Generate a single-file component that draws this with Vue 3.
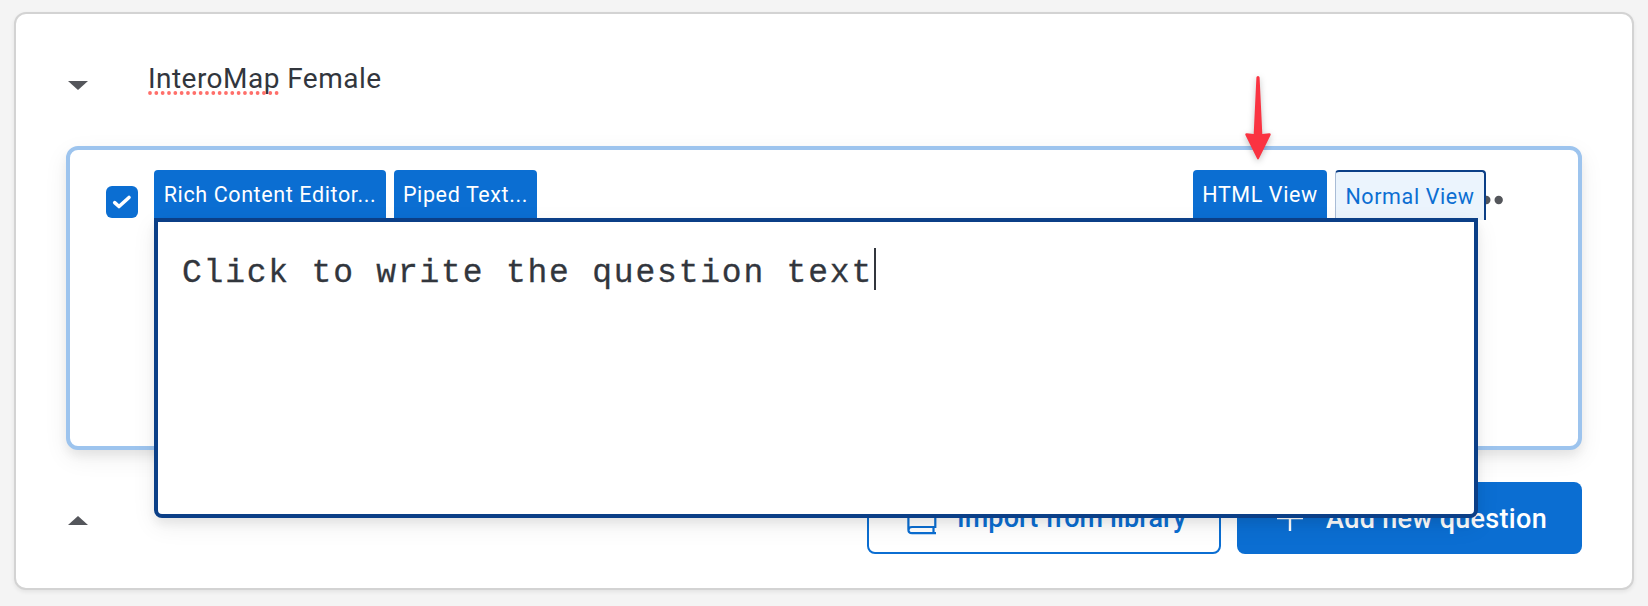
<script setup>
const title = { checked: 'InteroMap', rest: ' Female' }
const questionText = 'Click to write the question text'
</script>

<template>
  <main class="page">
    <section class="block">
      <header class="block-head">
        <svg class="caret" width="20" height="9" viewBox="0 0 20 9"><path d="M0 0H20L10 9Z" fill="#54565b" /></svg>
        <h1 class="title"><span class="misspelt">{{ title.checked }}<svg class="dots" width="132" height="4" viewBox="0 0 132 4"><line x1="2" y1="2" x2="131" y2="2" stroke="#ff6f6a" stroke-width="3.8" stroke-linecap="round" stroke-dasharray="0 6.33" /></svg></span>{{ title.rest }}</h1>
      </header>

      <article class="question">
        <span class="check">
          <svg width="32" height="32" viewBox="0 0 32 32"><path d="M8.7 16.7L13 20.5L23 11.5" fill="none" stroke="#fff" stroke-width="3.6" stroke-linecap="round" stroke-linejoin="round" /></svg>
        </span>
        <svg class="more" width="36" height="10" viewBox="0 0 36 10"><circle cx="5" cy="5" r="4.2" /><circle cx="17.3" cy="5" r="4.2" /><circle cx="29.7" cy="5" r="4.2" /></svg>

        <div class="editor">
          <nav class="tabs">
            <button class="tab rich"><span>Rich Content Editor...</span></button>
            <button class="tab piped"><span>Piped Text...</span></button>
            <button class="tab html"><span>HTML View</span></button>
            <button class="tab normal"><span>Normal View</span></button>
          </nav>
          <div class="field">
            <span class="code">{{ questionText }}</span><i class="cursor"></i>
          </div>
        </div>

        <svg class="arrow" width="28" height="88" viewBox="0 0 28 88"><path d="M12.4 2.6Q12.5 1 14 1Q15.500 1 15.600 2.600L18.300 59L25.300 58.300Q27.300 58.500 26.500 60.200L15 83.500Q14 85.500 13 83.500L1.500 60.200Q.7 58.500 2.700 58.300L9.700 59Z" fill="#fa3341" /></svg>
      </article>

      <footer class="block-foot">
        <svg class="caret" width="20" height="9" viewBox="0 0 20 9"><path d="M0 9H20L10 0Z" fill="#54565b" /></svg>
        <button class="action import">
          <svg class="book" width="30" height="34" viewBox="0 0 30 34" fill="none" stroke="#0b6ed2" stroke-width="2.2"><path d="M29 32.200H5Q1.400 32.200 1.400 28.500V4Q1.400 1.200 4 1.200H28.300V26H5Q1.400 26 1.400 29.500M26.500 26V32.200" /></svg>
          <span>Import from library</span>
        </button>
        <button class="action add">
          <svg class="plus" width="26" height="26" viewBox="0 0 26 26"><path d="M13 0V26M0 13H26" stroke="#fff" stroke-width="2.4" /></svg>
          <span>Add new question</span>
        </button>
      </footer>
    </section>
  </main>
</template>

<style>
body { margin: 0; background: #f4f4f4; }
</style>

<style scoped>
.page {
  box-sizing: border-box;
  width: 1648px;
  height: 606px;
  padding: 12px 14px 16px;
  overflow: hidden;
  background: #f4f4f4;
  font-family: Roboto, Inter, sans-serif;
  color: #32363d;
}
.block {
  box-sizing: border-box;
  height: 578px;
  padding: 0 50px;
  border: 2px solid #d3d3d3;
  border-radius: 12px;
  background: #fff;
  box-shadow: 0 2px 4px rgba(0, 0, 0, .07);
}
button {
  box-sizing: border-box;
  margin: 0;
  padding: 0;
  border: 0;
  font: inherit;
  white-space: nowrap;
}
svg { display: block; flex: none; }
.block-head {
  display: flex;
  height: 132px;
}
.block-head .caret { margin: 67px 0 0 2px; }
.title {
  margin: 45px 0 0 60px;
  font-size: 28px;
  line-height: 40px;
  font-weight: 400;
  letter-spacing: .46px;
  white-space: pre;
}
.misspelt { position: relative; }
.dots { position: absolute; left: 0; bottom: 0; }
.question {
  position: relative;
  box-sizing: border-box;
  display: flex;
  height: 304px;
  padding: 20px 0 0 36px;
  border: 4px solid #9dc4ee;
  border-radius: 12px;
  background: #fff;
  box-shadow: 0 8px 24px rgba(0, 0, 0, .07), 0 6px 10px rgba(0, 0, 0, .06);
}
.check {
  width: 32px;
  height: 32px;
  margin: 16px 16px 0 0;
  border-radius: 6px;
  background: #0b6ed2;
}
.more {
  position: absolute;
  left: 1399px;
  top: 45px;
  fill: #54565b;
}
.editor {
  position: relative;
  width: 1324px;
  height: 348px;
}
.tabs {
  display: flex;
  width: 1332px;
  height: 48px;
}
.tab {
  height: 48px;
  border-radius: 4px 4px 0 0;
  background: #0b6ed2;
  color: #fff;
  font-size: 21.500px;
  line-height: 49px;
  letter-spacing: .61px;
}
.rich { width: 232px; }
.piped { width: 143px; margin-left: 8px; }
.html { width: 134px; margin-left: auto; }
.normal {
  width: 151px;
  height: 50px;
  margin-left: 8px;
  border-top: 2px solid #0b3f87;
  border-right: 2px solid #0b3f87;
  border-left: 1px solid #a9bcd6;
  background: #ebf4fd;
  color: #0b6ed2;
}
.field {
  position: relative;
  box-sizing: border-box;
  display: flex;
  height: 300px;
  padding: 26px 24px;
  border: 4px solid #0b3f87;
  border-radius: 0 0 8px 8px;
  background: #fff;
  box-shadow: 0 8px 24px rgba(0, 0, 0, .07), 0 6px 10px rgba(0, 0, 0, .06);
}
.code {
  padding-top: 5px;
  font-family: "Courier New", "Liberation Mono", monospace;
  font-size: 33px;
  line-height: 42px;
  letter-spacing: 1.790px;
  -webkit-text-stroke: .3px #32363d;
}
.cursor {
  width: 2px;
  height: 42px;
  margin-left: 1px;
  background: #32363d;
}
.arrow {
  position: absolute;
  left: 1174px;
  top: -75px;
  filter: drop-shadow(0 2px 3px rgba(0, 0, 0, .25));
}
.block-foot {
  display: flex;
  height: 72px;
  margin-top: 32px;
}
.block-foot .caret { margin: 34px 0 0 2px; }
.action {
  display: flex;
  height: 72px;
  border-radius: 8px;
  font-size: 27px;
  font-weight: 500;
  letter-spacing: .3px;
}
.import {
  width: 354px;
  margin-left: auto;
  border: 2px solid #0b6ed2;
  background: #fff;
  color: #0b6ed2;
  line-height: 69px;
  letter-spacing: .1px;
}
.book { margin: 17px 0 0 38px; }
.import span { margin-left: 20px; }
.add {
  width: 345px;
  margin-left: 16px;
  background: #0b6ed2;
  color: #fff;
  line-height: 74px;
}
.plus { margin: 23px 0 0 40px; }
.add span { margin-left: 23px; }
</style>
